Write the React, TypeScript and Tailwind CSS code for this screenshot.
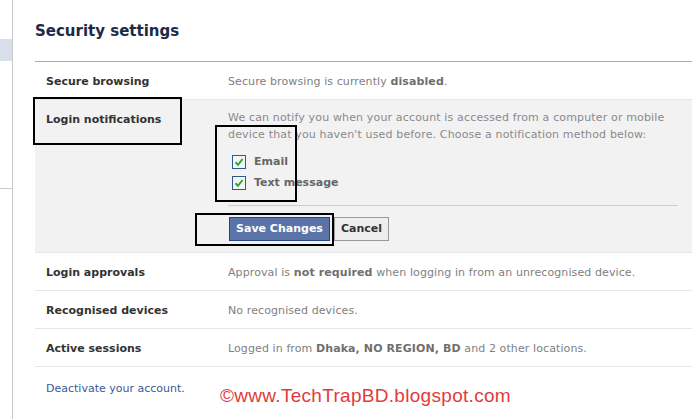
import React from "react";

const font = { fontFamily: '"DejaVu Sans", Verdana, sans-serif' };

function Check() {
  return (
    <span className="flex h-[14px] w-[14px] shrink-0 items-center justify-center border border-[#2d5a8a] bg-[#f4f4f4]">
      <svg width="10" height="10" viewBox="0 0 10 10">
        <path d="M1.5 5.2 L4 7.8 L8.6 2" fill="none" stroke="#2fa53a" strokeWidth="2" />
      </svg>
    </span>
  );
}

function Row({ label, children }: { label: string; children: React.ReactNode }) {
  return (
    <div className="flex h-[38px] items-center border-b border-[#e6e6e6] pt-[4px]">
      <div className="w-[193px] pl-[11px] text-[11px] font-bold text-[#333]">{label}</div>
      <div className="text-[11px] tracking-[0.1px] text-[#808080]">{children}</div>
    </div>
  );
}

export default function App() {
  return (
    <div className="relative flex h-[419px] w-[692px] overflow-hidden bg-white" style={font}>
      {/* left rail */}
      <div className="w-[13px] shrink-0 border-r border-[#c8c8c8]">
        <div className="mt-[39px] h-[22px] bg-[#d8dfea]" />
        <div className="mt-[127px] border-t border-[#cccccc]" />
      </div>

      <div className="flex-1 pl-[22px]">
        <div className="flex h-[62px] items-center border-b border-[#aaaaaa] pt-[2px]">
          <h1 className="text-[15px] font-bold text-[#1c2a47]">Security settings</h1>
        </div>

        <Row label="Secure browsing">
          Secure browsing is currently <b className="text-[#6f6f6f]">disabled</b>.
        </Row>

        {/* expanded section */}
        <div className="flex h-[153px] border-b border-[#e6e6e6] bg-[#f2f2f2]">
          <div className="w-[193px] pl-[11px] pt-[12px] text-[11px] font-bold text-[#333]">
            Login notifications
          </div>
          <div className="flex-1 pr-[24px] pt-[9px]">
            <p className="w-[450px] text-[11px] leading-[17px] tracking-[0.15px] text-[#8a8a8a]">
              We can notify you when your account is accessed from a computer or mobile device that
              you haven't used before. Choose a notification method below:
            </p>
            <div className="mt-[12px] flex flex-col gap-[7px] pl-[4px]">
              <label className="flex h-[14px] items-center gap-[8px] text-[11px] font-bold text-[#666]">
                <Check /> Email
              </label>
              <label className="flex h-[14px] items-center gap-[8px] text-[11px] font-bold text-[#666]">
                <Check /> Text message
              </label>
            </div>
            <div className="mt-[15px] border-t border-[#cccccc]" />
            <div className="mt-[11px] flex gap-[4px] pl-[1px]">
              <button className="h-[24px] w-[101px] border border-[#29447e] bg-[#5b74a8] text-[11px] font-bold text-white">
                Save Changes
              </button>
              <button className="h-[24px] w-[55px] border border-[#999] bg-[#eeeeee] text-[11px] font-bold text-[#333]">
                Cancel
              </button>
            </div>
          </div>
        </div>

        <Row label="Login approvals">
          Approval is <b className="text-[#6f6f6f]">not required</b> when logging in from an unrecognised device.
        </Row>
        <Row label="Recognised devices">No recognised devices.</Row>
        <Row label="Active sessions">
          Logged in from <b className="text-[#6f6f6f]">Dhaka, NO REGION, BD</b> and 2 other locations.
        </Row>

        <div className="flex items-start pt-[14px]">
          <a className="w-[185px] pl-[11px] text-[11px] text-[#3b5998]">Deactivate your account.</a>
          <span
            className="pt-[1px] text-[19px] tracking-[0.3px] text-[#e23b3b]"
            style={{ fontFamily: '"Liberation Sans", Arial, sans-serif' }}
          >
            ©www.TechTrapBD.blogspot.com
          </span>
        </div>
      </div>

      {/* annotation boxes */}
      <div className="absolute left-[33px] top-[97px] h-[48px] w-[149px] border-2 border-black" />
      <div className="absolute left-[215px] top-[125px] h-[77px] w-[82px] border-2 border-black" />
      <div className="absolute left-[195px] top-[213px] h-[33px] w-[139px] border-2 border-black" />
    </div>
  );
}
